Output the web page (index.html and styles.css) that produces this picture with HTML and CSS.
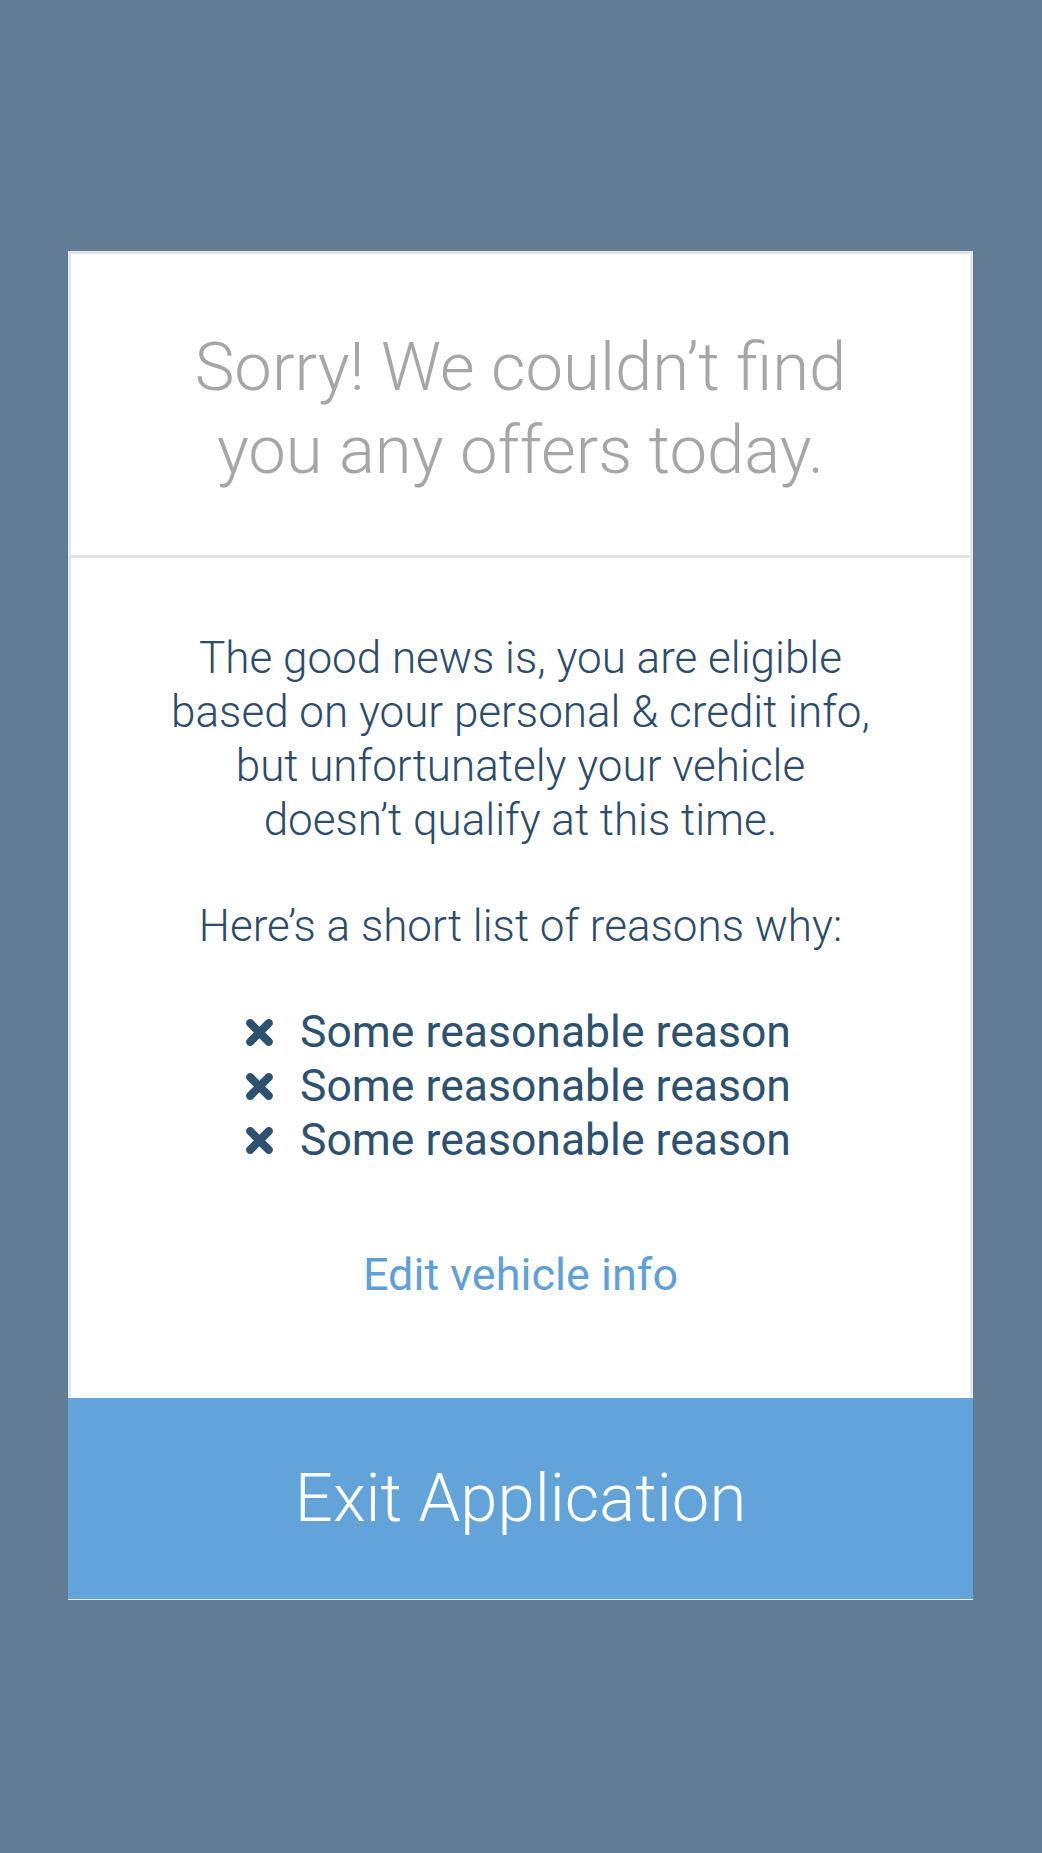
FILE: index.html
```html
<!DOCTYPE html>
<html lang="en">
<head>
    <meta charset="UTF-8">
    <meta name="viewport" content="width=device-width, initial-scale=1.0">
    <title>No Offers</title>
    <link rel="stylesheet" href="styles.css">
</head>
<body>

<!-- Result card -->
<div class="card">
    <div class="card-header">
        <h1>Sorry! We couldn&rsquo;t find<br>you any offers today.</h1>
    </div>

    <div class="card-body">
        <p class="message">The good news is, you are eligible<br>based on your personal &amp; credit info,<br>but unfortunately your vehicle<br>doesn&rsquo;t qualify at this time.</p>
        <p class="message">Here&rsquo;s a short list of reasons why:</p>

        <ul class="reasons">
            <li>
                <svg class="x-icon" viewBox="0 0 30 30"><path d="M6 6 L24 24 M24 6 L6 24" /></svg>
                Some reasonable reason
            </li>
            <li>
                <svg class="x-icon" viewBox="0 0 30 30"><path d="M6 6 L24 24 M24 6 L6 24" /></svg>
                Some reasonable reason
            </li>
            <li>
                <svg class="x-icon" viewBox="0 0 30 30"><path d="M6 6 L24 24 M24 6 L6 24" /></svg>
                Some reasonable reason
            </li>
        </ul>

        <a class="edit-link" href="#">Edit vehicle info</a>
    </div>

    <button class="exit-button">Exit Application</button>
</div>

</body>
</html>
```

FILE: styles.css
```css
body {
    margin: 0;
    padding: 0;
    background-color: #627c93;
    font-family: 'Roboto', 'Liberation Sans', sans-serif;
    height: 1853px;
    overflow: hidden;
}

/* Card */
.card {
    width: 905px;
    margin: 251px 0 0 68px;
}

.card-header,
.card-body {
    background-color: #ffffff;
    border-left: 3px solid #e4e8ec;
    border-right: 3px solid #e4e8ec;
    text-align: center;
}

.card-header {
    border-top: 3px solid #e0e2e4;
    border-bottom: 3px solid #e3e3e3;
    padding: 72px 0 63px;
}

h1 {
    margin: 0;
    font-size: 67px;
    font-weight: 300;
    line-height: 83px;
    color: #a6a6a6;
}

.card-body {
    padding: 73px 0 96px;
}

.message {
    margin: 0 0 52px;
    font-size: 44px;
    font-weight: 300;
    line-height: 54px;
    color: #2e4c69;
}

/* Reasons list */
.reasons {
    list-style: none;
    margin: 0;
    padding: 0;
    display: flex;
    flex-direction: column;
    align-items: center;
}

.reasons li {
    display: flex;
    align-items: center;
    gap: 25px;
    font-size: 44.5px;
    line-height: 54px;
    color: #2e5170;
    padding-right: 6px;
}

.x-icon {
    width: 31px;
    height: 31px;
    stroke: #2e5170;
    stroke-width: 8;
    stroke-linecap: round;
    fill: none;
}

.edit-link {
    display: block;
    margin-top: 81px;
    font-size: 45px;
    line-height: 54px;
    color: #5fa0d8;
    text-decoration: none;
}

/* Exit button */
.exit-button {
    display: block;
    width: 100%;
    height: 202px;
    margin: 0;
    padding: 0 0 2px;
    border: none;
    border-bottom: 1px solid #e8eef4;
    background-color: #62a3da;
    color: #ffffff;
    font-family: 'Roboto', 'Liberation Sans', sans-serif;
    font-size: 67px;
    font-weight: 300;
    cursor: pointer;
}
```
